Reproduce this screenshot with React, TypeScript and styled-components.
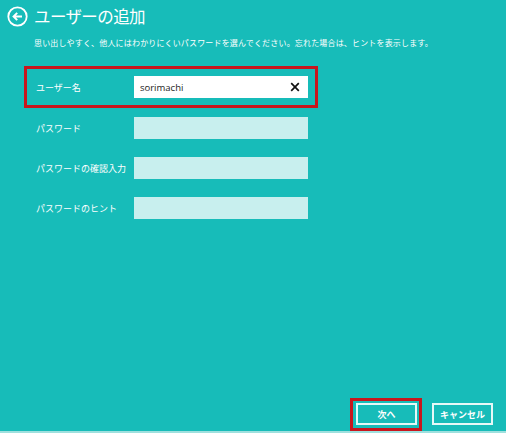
import { FC } from 'react';
import styled, { createGlobalStyle } from 'styled-components';

const GlobalStyle = createGlobalStyle`
  html, body {
    margin: 0;
    padding: 0;
    background: #17bcb9;
  }
  * {
    box-sizing: border-box;
  }
`;

const JP = `"Noto Sans CJK JP", "Noto Sans", sans-serif`;

const fields = [
  { label: 'ユーザー名', value: 'sorimachi', active: true },
  { label: 'パスワード', value: '', active: false },
  { label: 'パスワードの確認入力', value: '', active: false },
  { label: 'パスワードのヒント', value: '', active: false },
];

const BackIcon: FC = () => (
  <svg width="21" height="21" viewBox="0 0 21 21">
    <circle cx="10.5" cy="10.5" r="9.2" fill="none" stroke="#fff" strokeWidth="1.8" />
    <path d="M15 10.5H6.8M10.2 6.9L6.6 10.5l3.6 3.6" fill="none" stroke="#fff" strokeWidth="2" />
  </svg>
);

const ClearIcon: FC = () => (
  <svg width="10" height="10" viewBox="0 0 10 10">
    <path d="M1.2 1.2l7.6 7.6M8.8 1.2L1.2 8.8" stroke="#111" strokeWidth="1.7" />
  </svg>
);

const App: FC = () => {
  return (
    <>
      <GlobalStyle />
      <Page>
        <Header>
          <BackIcon />
          <Title>ユーザーの追加</Title>
        </Header>
        <Description>
          思い出しやすく、他人にはわかりにくいパスワードを選んでください。忘れた場合は、ヒントを表示します。
        </Description>

        <Form>
          {fields.map((field) => (
            <Row key={field.label} $highlight={field.active}>
              <Label>{field.label}</Label>
              <Input $filled={field.active}>
                {field.value && <Value>{field.value}</Value>}
                {field.active && <ClearIcon />}
              </Input>
            </Row>
          ))}
        </Form>

        <Footer>
          <Highlight>
            <Button>次へ</Button>
          </Highlight>
          <Button>キャンセル</Button>
        </Footer>
      </Page>
    </>
  );
};

export default App;

const Page = styled.div`
  display: flex;
  flex-direction: column;
  width: 506px;
  height: 433px;
  background: #17bcb9;
  color: #fff;
  font-family: ${JP};
  border-bottom: 2px solid #9fe0de;
`;

const Header = styled.div`
  display: flex;
  align-items: center;
  gap: 6px;
  padding: 5px 0 0 7px;
  height: 27px;
`;

const Title = styled.h1`
  margin: 0;
  font-size: 16.5px;
  font-weight: 400;
  line-height: 20px;
  letter-spacing: -0.6px;
`;

const Description = styled.p`
  margin: 11px 0 0 34px;
  font-size: 8px;
  line-height: 10px;
  letter-spacing: 0.17px;
  white-space: nowrap;
`;

const Form = styled.div`
  display: flex;
  flex-direction: column;
  width: 294px;
  margin: 18px 0 0 24px;
`;

const Row = styled.div<{ $highlight?: boolean }>`
  display: flex;
  align-items: center;
  padding: ${({ $highlight }) => ($highlight ? '7px' : '6px')} 7px
    ${({ $highlight }) => ($highlight ? '7px' : '6px')} 9px;
  border: 3px solid ${({ $highlight }) => ($highlight ? '#c8161d' : 'transparent')};
`;

const Label = styled.span`
  width: 98px;
  font-size: 9px;
  white-space: nowrap;
`;

const Input = styled.div<{ $filled?: boolean }>`
  display: flex;
  align-items: center;
  justify-content: space-between;
  width: 174px;
  height: 22px;
  padding: 0 8px 0 6px;
  background: ${({ $filled }) => ($filled ? '#ffffff' : '#c8efee')};
`;

const Value = styled.span`
  font-family: "Open Sans", "Noto Sans", sans-serif;
  font-size: 9.5px;
  color: #222;
`;

const Footer = styled.div`
  display: flex;
  align-items: flex-start;
  justify-content: flex-end;
  gap: 10px;
  margin-top: auto;
  padding-right: 13px;
`;

const Highlight = styled.div`
  padding: 2px 2px 3px 3px;
  border: 3px solid #c8161d;
`;

const Button = styled.button`
  display: flex;
  align-items: center;
  justify-content: center;
  width: 61px;
  height: 22px;
  margin-top: 5px;
  padding: 0;
  border: 2px solid #e6f8f7;
  background: transparent;
  color: #fff;
  font-family: ${JP};
  font-size: 9px;
  font-weight: 700;

  ${Highlight} > & {
    margin-top: 0;
  }
`;
